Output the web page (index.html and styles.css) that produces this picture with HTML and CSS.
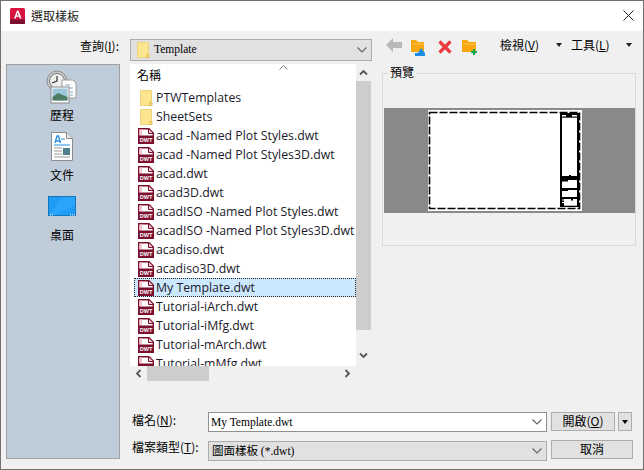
FILE: index.html
```html
<!DOCTYPE html>
<html lang="zh-Hant">
<head>
<meta charset="utf-8">
<title>選取樣板</title>
<link rel="stylesheet" href="styles.css">
</head>
<body>
<svg class="defs" width="0" height="0">
  <defs>
    <symbol id="dwt" viewBox="0 0 16 16">
      <path d="M.7.7H11L15.300 5V15.300H.7Z" fill="#fff" stroke="#7d0f2e" stroke-width="1.400"/>
      <path d="M1.500 1.500H4V7H1.500Z" fill="#f6c6d0"/>
      <path d="M10.500 1V5.500H15" fill="#f3c8d2" stroke="#7d0f2e"/>
      <rect y="7.500" width="16" height="8.500" fill="#7d0f2e"/>
      <text x="8" y="14" class="dwt-text" text-anchor="middle">DWT</text>
    </symbol>
    <symbol id="fold" viewBox="0 0 16 16">
      <path d="M2.500.5H13.500V15.500H2.500Z" fill="#fde68f" stroke="#eed27a"/>
      <path d="M11.500 12.500H14V15.500H11.500Z" fill="#fde68f" stroke="#e5bd4e"/>
    </symbol>
    <symbol id="chev" viewBox="0 0 12 8">
      <path d="M1.500 1.500L6 6L10.500 1.500" fill="none" stroke="#666" stroke-width="1.200"/>
    </symbol>
  </defs>
</svg>
<div class="window">
  <header class="titlebar">
    <svg class="app-icon" width="15" height="16" viewBox="0 0 15 16">
      <rect width="15" height="16" rx="1.500" fill="#d8123f"/>
      <rect y="11.500" width="15" height="4.500" fill="#7d1030"/>
      <path d="M4 10.500L7 2.500H8.500L11.500 10.500H9.800L9.200 8.800H6.300L5.700 10.500ZM6.800 7.400H8.700L7.750 4.600Z" fill="#fff"/>
    </svg>
    <span class="title">選取樣板</span>
    <svg class="close" width="11" height="11" viewBox="0 0 11 11">
      <path d="M.5.5L10.500 10.500M10.500.5L.5 10.500" stroke="#222" stroke-width="1"/>
    </svg>
  </header>
  <div class="content">
    <div class="left">
      <div class="look-label">查詢(<u>I</u>):</div>
      <nav class="places">
        <div class="place">
          <svg class="place-icon" width="32" height="36" viewBox="0 0 32 36">
            <circle cx="11" cy="11" r="10" fill="#c9c9c9" stroke="#8f8f8f"/>
            <circle cx="11" cy="11" r="7.500" fill="#eef0f0" stroke="#777"/>
            <path d="M11 6V11L6 13" fill="none" stroke="#333" stroke-width="1.200"/>
            <path d="M16 10H27L30 13V28H16Z" fill="#fff" stroke="#9a9a9a"/>
            <path d="M19 15H24M19 18H27M24 22H27M24 25H27" stroke="#7fa7c7"/>
            <rect x="5" y="17" width="18" height="16" fill="#fff" stroke="#888"/>
            <rect x="6.500" y="18.500" width="15" height="12" fill="#9ec7dd"/>
            <path d="M6.500 27L12 23L21.500 27V30.500H6.500Z" fill="#4d7d62"/>
          </svg>
          <span>歷程</span>
        </div>
        <div class="place">
          <svg class="place-icon" width="32" height="36" viewBox="0 0 32 36">
            <path d="M5.500 2.500H20.500L26.500 8.500V30.500H5.500Z" fill="#fff" stroke="#8c8c8c"/>
            <path d="M20.500 2.500V8.500H26.500" fill="#e4e4e4" stroke="#8c8c8c"/>
            <path d="M9 13L11 6H12.500L14.500 13M10 11H13.500" fill="none" stroke="#2b8fe0" stroke-width="1.400"/>
            <path d="M15 9H19M8 15H24" stroke="#2b8fe0" stroke-width="1.200"/>
            <path d="M8 18H16M8 21H16M8 24H16M8 27H24" stroke="#9a9a9a"/>
            <rect x="17" y="18" width="7" height="7" fill="#4f7f8f"/>
          </svg>
          <span>文件</span>
        </div>
        <div class="place">
          <svg class="place-icon" width="32" height="36" viewBox="0 0 32 36">
            <rect x="2.500" y="6.500" width="27" height="19" fill="#1e9cf5" stroke="#1177bb"/>
            <path d="M3 25L16 7H29V15L10 25Z" fill="#30aaff" opacity=".7"/>
            <path d="M4 25H7M24 25H29" stroke="#fff" stroke-dasharray="1 1"/>
          </svg>
          <span>桌面</span>
        </div>
      </nav>
    </div>
    <div class="right">
      <div class="top">
        <div class="browser">
          <div class="combo look-combo">
            <svg class="combo-folder" width="16" height="16"><use href="#fold"/></svg>
            <span class="combo-text">Template</span>
            <svg class="chev" width="12" height="8"><use href="#chev"/></svg>
          </div>
          <div class="file-pane">
            <div class="list-row">
              <div class="list">
                <div class="list-head"><span>名稱</span><svg class="sort" width="9" height="5" viewBox="0 0 9 5"><path d="M.5 4.500L4.500.5L8.500 4.500" fill="none" stroke="#777"/></svg></div>
                <div class="item"><svg class="ico" width="16" height="16"><use href="#fold"/></svg><span>PTWTemplates</span></div>
                <div class="item"><svg class="ico" width="16" height="16"><use href="#fold"/></svg><span>SheetSets</span></div>
                <div class="item"><svg class="ico" width="16" height="16"><use href="#dwt"/></svg><span>acad -Named Plot Styles.dwt</span></div>
                <div class="item"><svg class="ico" width="16" height="16"><use href="#dwt"/></svg><span>acad -Named Plot Styles3D.dwt</span></div>
                <div class="item"><svg class="ico" width="16" height="16"><use href="#dwt"/></svg><span>acad.dwt</span></div>
                <div class="item"><svg class="ico" width="16" height="16"><use href="#dwt"/></svg><span>acad3D.dwt</span></div>
                <div class="item"><svg class="ico" width="16" height="16"><use href="#dwt"/></svg><span>acadISO -Named Plot Styles.dwt</span></div>
                <div class="item"><svg class="ico" width="16" height="16"><use href="#dwt"/></svg><span>acadISO -Named Plot Styles3D.dwt</span></div>
                <div class="item"><svg class="ico" width="16" height="16"><use href="#dwt"/></svg><span>acadiso.dwt</span></div>
                <div class="item"><svg class="ico" width="16" height="16"><use href="#dwt"/></svg><span>acadiso3D.dwt</span></div>
                <div class="item selected"><svg class="ico" width="16" height="16"><use href="#dwt"/></svg><span>My Template.dwt</span></div>
                <div class="item"><svg class="ico" width="16" height="16"><use href="#dwt"/></svg><span>Tutorial-iArch.dwt</span></div>
                <div class="item"><svg class="ico" width="16" height="16"><use href="#dwt"/></svg><span>Tutorial-iMfg.dwt</span></div>
                <div class="item"><svg class="ico" width="16" height="16"><use href="#dwt"/></svg><span>Tutorial-mArch.dwt</span></div>
                <div class="item"><svg class="ico" width="16" height="16"><use href="#dwt"/></svg><span>Tutorial-mMfg.dwt</span></div>
              </div>
              <div class="vscroll">
                <svg class="vs-up" width="9" height="7" viewBox="0 0 9 7"><path d="M1 5.500L4.500 2L8 5.500" fill="none" stroke="#555" stroke-width="1.800"/></svg>
                <div class="vs-thumb"></div>
                <svg class="vs-down" width="9" height="7" viewBox="0 0 9 7"><path d="M1 1.500L4.500 5L8 1.500" fill="none" stroke="#555" stroke-width="1.800"/></svg>
              </div>
            </div>
            <div class="hscroll">
              <svg class="hs-left" width="7" height="9" viewBox="0 0 7 9"><path d="M5.500 1L2 4.500L5.500 8" fill="none" stroke="#555" stroke-width="1.800"/></svg>
              <div class="hs-thumb"></div>
              <svg class="hs-right" width="7" height="9" viewBox="0 0 7 9"><path d="M1.500 1L5 4.500L1.500 8" fill="none" stroke="#555" stroke-width="1.800"/></svg>
            </div>
          </div>
        </div>
        <div class="side">
          <div class="toolbar">
            <svg class="tb-back" width="16" height="14" viewBox="0 0 16 14"><path d="M0 7L7 0V4H16V10H7V14Z" fill="#b8b8b8"/></svg>
            <svg class="tb-up" width="15" height="17" viewBox="0 0 15 17"><path d="M0 1H5L7 3H13V13H0Z" fill="#f9a70f"/><path d="M1 5H13" stroke="#ffc85a"/><path d="M9 17H4V14H7L10 9L14 14V17Z" fill="#1b8fe8"/></svg>
            <svg class="tb-del" width="14" height="14" viewBox="0 0 14 14"><path d="M1.500 1.500L12.500 12.500M12.500 1.500L1.500 12.500" stroke="#ec3b3f" stroke-width="3.200"/></svg>
            <svg class="tb-new" width="16" height="17" viewBox="0 0 16 17"><path d="M0 1H5L7 3H14V13H0Z" fill="#f9a70f"/><path d="M1 5H14" stroke="#ffc85a"/><path d="M12 10V16M9 13H15" stroke="#18a84b" stroke-width="2.200"/></svg>
            <span class="tb-menu view">檢視(<u>V</u>)</span>
            <i class="caret"></i>
            <span class="tb-menu tools">工具(<u>L</u>)</span>
            <i class="caret last"></i>
          </div>
          <fieldset class="preview">
            <legend>預覽</legend>
            <div class="band">
              <svg class="sheet" width="154" height="101" viewBox="0 0 154 101">
                <rect width="154" height="101" fill="#fff"/>
                <rect x="1.500" y="2.500" width="150" height="96" fill="none" stroke="#000" stroke-width="1.600" stroke-dasharray="8 2"/>
                <rect x="132" y="3" width="19" height="94" fill="#000"/>
                <rect x="134" y="5" width="4" height="1.500" fill="#fff"/>
                <rect x="144" y="5" width="5" height="1.500" fill="#fff"/>
                <rect x="134" y="7.700" width="15" height="59" fill="#fff"/>
                <rect x="134" y="70" width="15" height="8" fill="#fff"/>
                <rect x="134" y="80" width="15" height="7" fill="#fff"/>
                <rect x="136" y="89" width="13" height="6.700" fill="#fff"/>
                <path d="M134 66H149V67.500H134ZM141 65H143V67H141ZM134 70H140V71.500H134ZM134 80H140V81H134ZM143 89H145V90.500H143Z" fill="#000"/>
                <path d="M134 90H136M134 92.500H136" stroke="#fff"/>
              </svg>
            </div>
          </fieldset>
        </div>
      </div>
      <div class="form">
        <div class="form-row">
          <label class="field-label">檔名(<u>N</u>):</label>
          <div class="combo name-input"><span class="combo-text">My Template.dwt</span><svg class="chev" width="12" height="8"><use href="#chev"/></svg></div>
          <button class="btn open">開啟(<u>O</u>)</button>
          <button class="btn drop"><i class="caret dark"></i></button>
        </div>
        <div class="form-row second">
          <label class="field-label">檔案類型(<u>T</u>):</label>
          <div class="combo type-combo"><span class="combo-text">圖面樣板 (*.dwt)</span><svg class="chev" width="12" height="8"><use href="#chev"/></svg></div>
          <button class="btn cancel">取消</button>
        </div>
      </div>
    </div>
  </div>
</div>
</body>
</html>
```
FILE: styles.css
```css
* { box-sizing: border-box; }
html, body { margin: 0; padding: 0; }
body { width: 644px; height: 470px; overflow: hidden; background: #f0f0f0; }
.defs { display: block; height: 0; }
.dwt-text { font: bold 5.500px "Liberation Sans", sans-serif; fill: #fff; }
.window {
  width: 644px; height: 470px; display: flex; flex-direction: column;
  background: #f0f0f0; border: 1px solid #707070;
  font: 11.500px/16px "Liberation Serif", "Noto Sans CJK TC", serif; color: #000;
}
.titlebar { height: 30px; flex: none; background: #fff; display: flex; align-items: center; padding-left: 9px; }
.app-icon { flex: none; }
.title { margin: -2px 0 0 6px; font: 12px "Noto Sans CJK TC", sans-serif; color: #222; }
.close { margin: -2px 9px 0 auto; }
.content { flex: 1; display: flex; padding-left: 5px; min-height: 0; }
.left { width: 114px; flex: none; margin-right: 10px; }
.look-label { height: 33px; padding: 7px 1px 0 0; text-align: right; font: 12px/16px "Noto Sans CJK TC", sans-serif; }
.places { height: 395px; background: #bfcddb; border: 1px solid #a0a0a0; padding: 5px 2px 0 0; }
.place { height: 60px; display: flex; flex-direction: column; align-items: center; font: 12px/18px "Noto Sans CJK TC", sans-serif; }
.place-icon { display: block; height: 36px; flex: none; }
.right { width: 506px; flex: none; }
.top { display: flex; padding-top: 8px; }
.browser { width: 242px; flex: none; margin-right: 10px; }
.combo { display: flex; align-items: center; background: #e1e1e1; border: 1px solid #adadad; }
.look-combo { height: 22px; margin-bottom: 3px; padding-left: 4px; }
.look-combo .combo-text { margin: -2px 0 0 3px; }
.combo-folder { flex: none; }
.combo-text { margin-left: 2px; margin-top: -1px; }
.chev { margin-left: auto; margin-right: 3px; flex: none; }
.file-pane { width: 241px; }
.list-row { display: flex; height: 302px; }
.list { width: 226px; height: 302px; overflow: hidden; background: #fff; flex: none; }
.list-head { height: 24px; display: flex; padding: 3px 0 0 7px; font: 12px/16px "Noto Sans CJK TC", sans-serif; position: relative; }
.sort { position: absolute; left: 149px; top: 1px; }
.item {
  height: 19px; display: flex; align-items: center; padding-left: 8px;
  font: 12.300px/19px "Open Sans", sans-serif; color: #1a1a2a; white-space: nowrap;
}
.ico { flex: none; margin-right: 2px; }
.selected { background: #cce8ff; outline: 1px dotted #222; outline-offset: -1px; margin-left: 4px; padding-left: 4px; }
.vscroll { width: 15px; flex: none; display: flex; flex-direction: column; align-items: center; background: #f0f0f0; }
.vs-up { margin-top: 5px; flex: none; }
.vs-thumb { width: 15px; height: 249px; margin-top: 5px; background: #cdcdcd; flex: none; }
.vs-down { margin-top: 22px; flex: none; }
.hscroll { width: 226px; height: 15px; display: flex; align-items: center; }
.hs-left { margin-left: 5px; flex: none; }
.hs-thumb { width: 62px; height: 15px; margin-left: 5px; background: #cdcdcd; flex: none; }
.hs-right { margin-left: 135px; flex: none; }
.side { width: 254px; flex: none; }
.toolbar { height: 25px; display: flex; align-items: center; padding: 0 0 10px 4px; font: 12px/16px "Noto Sans CJK TC", sans-serif; }
.toolbar svg { flex: none; }
.tb-back { margin-top: -4px; }
.tb-up { margin-left: 9px; margin-top: 1px; }
.tb-del { margin-left: 12px; }
.tb-new { margin-left: 10px; margin-top: 1px; }
.tb-menu { white-space: nowrap; margin-top: -3px; }
.view { margin-left: 22px; width: 39px; }
.tools { margin-left: 9px; width: 38px; }
.caret { display: block; width: 0; height: 0; border: 3px solid transparent; border-top: 4px solid #222; border-bottom: 0; flex: none; }
.toolbar .caret { margin-left: 17px; margin-top: -3px; }
.toolbar .caret.last { border-width: 4px 3.500px 0; border-top-color: #222; }
.preview { margin: 0; padding: 26px 1px 0; height: 182px; min-width: 0; border: 1px solid #d9d9d9; font: 12px/14px "Noto Sans CJK TC", sans-serif; }
.preview legend { padding: 1px 2px 3px; margin-left: 4px; }
.band { height: 105px; background: #898989; display: flex; padding: 2px 0 0 44px; margin-right: -1px; }
.sheet { display: block; }
.form { margin-top: 31px; }
.form-row { display: flex; align-items: flex-start; height: 20px; }
.second { margin-top: 9px; }
.field-label { width: 78px; flex: none; padding-left: 2px; margin-top: -2px; font: 12px/20px "Noto Sans CJK TC", sans-serif; white-space: nowrap; }
.second .field-label { margin-top: -4px; }
.name-input { width: 339px; height: 20px; background: #fff; border-color: #8f8f8f; flex: none; }
.type-combo { width: 339px; height: 20px; flex: none; }
.type-combo .combo-text { margin-left: 3px; }
.btn { height: 19px; margin: 0 0 0 4px; padding: 0 0 2px; background: #e1e1e1; border: 1px solid #adadad; font: 12px/16px "Noto Sans CJK TC", sans-serif; color: #000; flex: none; }
.open { width: 64px; }
.drop { width: 14px; margin-left: 3px; padding: 0; display: flex; align-items: center; justify-content: center; }
.caret.dark { border-width: 4px 3.500px 0; border-top-color: #000; }
.cancel { width: 82px; margin-top: -1px; }
```
